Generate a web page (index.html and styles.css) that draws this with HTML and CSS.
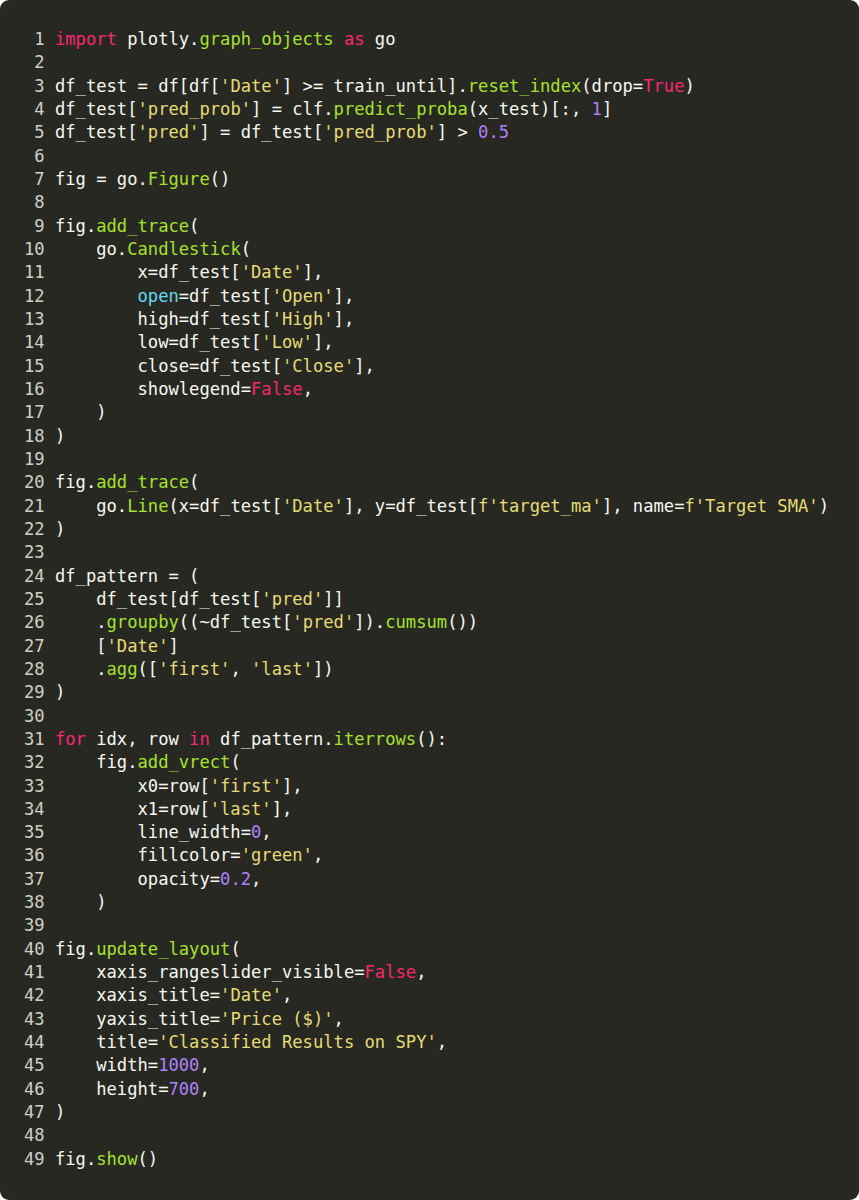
FILE: index.html
```html
<!DOCTYPE html>
<html>
<head>
<meta charset="utf-8">
<link rel="stylesheet" href="styles.css">
</head>
<body>
<div class="code">
<div class="ln"><span class="n">1</span><span class="k">import</span> plotly.<span class="f">graph_objects</span> <span class="k">as</span> go</div>
<div class="ln"><span class="n">2</span></div>
<div class="ln"><span class="n">3</span>df_test = df[df[<span class="s">'Date'</span>] &gt;= train_until].<span class="f">reset_index</span>(drop=<span class="k">True</span>)</div>
<div class="ln"><span class="n">4</span>df_test[<span class="s">'pred_prob'</span>] = clf.<span class="f">predict_proba</span>(x_test)[:, <span class="m">1</span>]</div>
<div class="ln"><span class="n">5</span>df_test[<span class="s">'pred'</span>] = df_test[<span class="s">'pred_prob'</span>] &gt; <span class="m">0.5</span></div>
<div class="ln"><span class="n">6</span></div>
<div class="ln"><span class="n">7</span>fig = go.<span class="f">Figure</span>()</div>
<div class="ln"><span class="n">8</span></div>
<div class="ln"><span class="n">9</span>fig.<span class="f">add_trace</span>(</div>
<div class="ln"><span class="n">10</span>    go.<span class="f">Candlestick</span>(</div>
<div class="ln"><span class="n">11</span>        x=df_test[<span class="s">'Date'</span>],</div>
<div class="ln"><span class="n">12</span>        <span class="c">open</span>=df_test[<span class="s">'Open'</span>],</div>
<div class="ln"><span class="n">13</span>        high=df_test[<span class="s">'High'</span>],</div>
<div class="ln"><span class="n">14</span>        low=df_test[<span class="s">'Low'</span>],</div>
<div class="ln"><span class="n">15</span>        close=df_test[<span class="s">'Close'</span>],</div>
<div class="ln"><span class="n">16</span>        showlegend=<span class="k">False</span>,</div>
<div class="ln"><span class="n">17</span>    )</div>
<div class="ln"><span class="n">18</span>)</div>
<div class="ln"><span class="n">19</span></div>
<div class="ln"><span class="n">20</span>fig.<span class="f">add_trace</span>(</div>
<div class="ln"><span class="n">21</span>    go.<span class="f">Line</span>(x=df_test[<span class="s">'Date'</span>], y=df_test[<span class="s">f'target_ma'</span>], name=<span class="s">f'Target SMA'</span>)</div>
<div class="ln"><span class="n">22</span>)</div>
<div class="ln"><span class="n">23</span></div>
<div class="ln"><span class="n">24</span>df_pattern = (</div>
<div class="ln"><span class="n">25</span>    df_test[df_test[<span class="s">'pred'</span>]]</div>
<div class="ln"><span class="n">26</span>    .<span class="f">groupby</span>((~df_test[<span class="s">'pred'</span>]).<span class="f">cumsum</span>())</div>
<div class="ln"><span class="n">27</span>    [<span class="s">'Date'</span>]</div>
<div class="ln"><span class="n">28</span>    .<span class="f">agg</span>([<span class="s">'first'</span>, <span class="s">'last'</span>])</div>
<div class="ln"><span class="n">29</span>)</div>
<div class="ln"><span class="n">30</span></div>
<div class="ln"><span class="n">31</span><span class="k">for</span> idx, row <span class="k">in</span> df_pattern.<span class="f">iterrows</span>():</div>
<div class="ln"><span class="n">32</span>    fig.<span class="f">add_vrect</span>(</div>
<div class="ln"><span class="n">33</span>        x0=row[<span class="s">'first'</span>],</div>
<div class="ln"><span class="n">34</span>        x1=row[<span class="s">'last'</span>],</div>
<div class="ln"><span class="n">35</span>        line_width=<span class="m">0</span>,</div>
<div class="ln"><span class="n">36</span>        fillcolor=<span class="s">'green'</span>,</div>
<div class="ln"><span class="n">37</span>        opacity=<span class="m">0.2</span>,</div>
<div class="ln"><span class="n">38</span>    )</div>
<div class="ln"><span class="n">39</span></div>
<div class="ln"><span class="n">40</span>fig.<span class="f">update_layout</span>(</div>
<div class="ln"><span class="n">41</span>    xaxis_rangeslider_visible=<span class="k">False</span>,</div>
<div class="ln"><span class="n">42</span>    xaxis_title=<span class="s">'Date'</span>,</div>
<div class="ln"><span class="n">43</span>    yaxis_title=<span class="s">'Price ($)'</span>,</div>
<div class="ln"><span class="n">44</span>    title=<span class="s">'Classified Results on SPY'</span>,</div>
<div class="ln"><span class="n">45</span>    width=<span class="m">1000</span>,</div>
<div class="ln"><span class="n">46</span>    height=<span class="m">700</span>,</div>
<div class="ln"><span class="n">47</span>)</div>
<div class="ln"><span class="n">48</span></div>
<div class="ln"><span class="n">49</span>fig.<span class="f">show</span>()</div>
</div>
</body>
</html>
```

FILE: styles.css
```css
html, body {
  margin: 0;
  padding: 0;
  background: #ffffff;
}

.code {
  box-sizing: border-box;
  width: 859px;
  height: 1200px;
  background: #272822;
  border-radius: 9px;
  padding: 28px 0 0 24px;
  font-family: "DejaVu Sans Mono", monospace;
  font-size: 17.15px;
  line-height: 23.33px;
  color: #f8f8f2;
}

.ln {
  white-space: pre;
  height: 23.33px;
}

.n {
  display: inline-block;
  width: 2ch;
  margin-right: 1ch;
  text-align: right;
  color: #d0d0c8;
}

.k { color: #f92672; }
.f { color: #a6e22e; }
.s { color: #e6db74; }
.m { color: #ae81ff; }
.c { color: #66d9ef; }
```
